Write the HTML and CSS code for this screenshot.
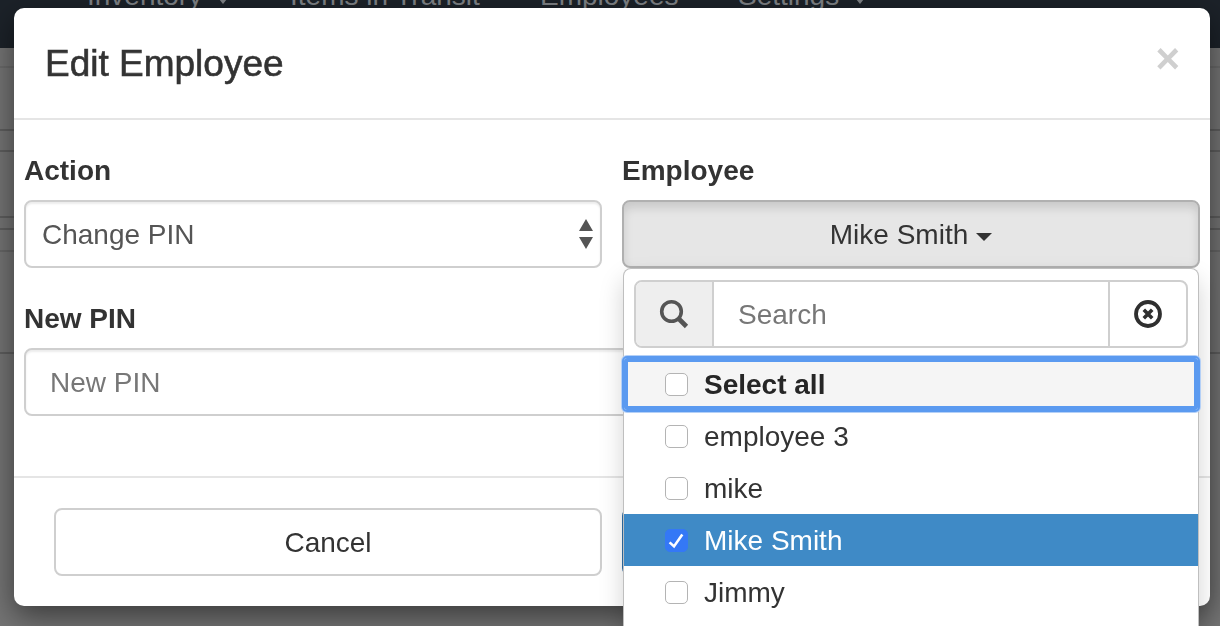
FILE: index.html
```html
<!DOCTYPE html>
<html lang="en">
<head>
<meta charset="utf-8">
<title>Edit Employee</title>
<link rel="stylesheet" href="styles.css">
</head>
<body>
<nav class="nav">
  <span class="nav-item nav-inventory">Inventory<i class="nav-caret"></i></span>
  <span class="nav-item nav-transit">Items in Transit</span>
  <span class="nav-item nav-employees">Employees</span>
  <span class="nav-item">Settings<i class="nav-caret"></i></span>
</nav>
<main class="page">
  <div class="rule rule-1"></div>
  <div class="rule rule-2"></div>
  <div class="rule rule-3"></div>
  <div class="rule rule-4"></div>
  <div class="rule rule-5"></div>
  <div class="rule rule-6"></div>
  <div class="rule rule-7"></div>
</main>
<section class="modal">
  <header class="modal-header">
    <h4 class="modal-title">Edit Employee</h4>
    <span class="close">×</span>
  </header>
  <div class="modal-body">
    <div class="field">
      <label class="label">Action</label>
      <div class="select">
        <span>Change PIN</span>
        <svg class="updown" width="14" height="30" viewBox="0 0 14 30"><path d="M7 0 14 12H0Z M0 18H14L7 30Z" fill="#555"/></svg>
      </div>
    </div>
    <div class="field field-employee">
      <label class="label">Employee</label>
      <button class="toggle">Mike Smith<i class="caret"></i></button>
      <div class="dropdown">
        <div class="search">
          <span class="addon addon-left">
            <svg width="30" height="30" viewBox="0 0 30 30"><circle cx="12.5" cy="12.5" r="9.8" fill="none" stroke="#555" stroke-width="3.6"/><path d="M19 19 27.5 27.5" stroke="#555" stroke-width="4.6"/></svg>
          </span>
          <input class="search-input" placeholder="Search">
          <span class="addon addon-right">
            <svg width="30" height="30" viewBox="0 0 30 30"><circle cx="15" cy="15" r="12" fill="none" stroke="#2f2f2f" stroke-width="3.8"/><path d="M10.8 10.8 19.2 19.2M19.2 10.8 10.8 19.2" stroke="#2f2f2f" stroke-width="3.6"/></svg>
          </span>
        </div>
        <ul class="options">
          <li class="option option-all"><i class="check"></i>Select all</li>
          <li class="option"><i class="check"></i>employee 3</li>
          <li class="option"><i class="check"></i>mike</li>
          <li class="option option-active"><i class="check check-on"><svg width="23" height="23" viewBox="0 0 23 23"><path d="M4.6 13.4 9 17.4 17.3 5.4" fill="none" stroke="#fff" stroke-width="2.6"/></svg></i>Mike Smith</li>
          <li class="option"><i class="check"></i>Jimmy</li>
        </ul>
      </div>
    </div>
    <div class="field field-wide">
      <label class="label">New PIN</label>
      <input class="text-input" placeholder="New PIN">
    </div>
  </div>
  <footer class="modal-footer">
    <button class="btn">Cancel</button>
    <button class="btn btn-primary">Save</button>
  </footer>
</section>
</body>
</html>
```
FILE: styles.css
```css
* { box-sizing: border-box; }
html, body { height: 100%; }
body {
  margin: 0;
  overflow: hidden;
  background: #747474;
  font-family: "Liberation Sans", Arial, sans-serif;
  font-size: 28px;
  color: #333;
}
.nav {
  height: 48px;
  background: #1c2229;
  display: flex;
  padding-left: 87px;
  overflow: hidden;
  color: #7f8286;
  line-height: 12px;
}
.nav-item { white-space: nowrap; margin-top: -10px; }
.nav-inventory { width: 203px; }
.nav-transit { width: 250px; }
.nav-employees { width: 198px; }
.nav-caret {
  display: inline-block;
  margin-left: 17px;
  vertical-align: 1px;
  border-top: 5px solid #7f8286;
  border-left: 4px solid transparent;
  border-right: 4px solid transparent;
}
.page { display: flex; flex-direction: column; }
.rule { height: 2px; background: #5e5e5e; }
.rule-1 { margin-top: 18px; background: #6a6a6a; }
.rule-2 { margin-top: 61px; }
.rule-3 { margin-top: 19px; }
.rule-4 { margin-top: 64px; }
.rule-5 { margin-top: 10px; }
.rule-6 { margin-top: 20px; background: #666; }
.rule-7 { margin-top: 100px; }
.modal {
  position: fixed;
  left: 14px;
  top: 8px;
  width: 1196px;
  height: 598px;
  background: #fff;
  border-radius: 10px;
  box-shadow: 0 10px 30px rgba(0, 0, 0, .5);
}
.modal-header {
  height: 112px;
  border-bottom: 2px solid #e5e5e5;
  display: flex;
  justify-content: space-between;
  padding: 0 30px 0 31px;
}
.modal-title {
  margin: 0;
  font-size: 37px;
  font-weight: 500;
  line-height: 112px;
  height: 110px;
  -webkit-text-stroke: .6px #333;
}
.close {
  font-size: 42px;
  font-weight: 700;
  color: #cfcfcf;
  line-height: 102px;
}
.modal-body {
  height: 356px;
  padding: 32px 10px 0;
  display: grid;
  grid-template-columns: 578px 578px;
  column-gap: 20px;
  row-gap: 32px;
  align-content: start;
}
.label {
  display: block;
  height: 36px;
  line-height: 38px;
  margin-bottom: 12px;
  font-weight: 700;
}
.select, .text-input {
  height: 68px;
  border: 2px solid #cfcfcf;
  border-radius: 8px;
  background: #fff;
  box-shadow: inset 0 2px 2px rgba(0, 0, 0, .075);
}
.select {
  display: flex;
  align-items: center;
  justify-content: space-between;
  padding: 2px 7px 0 16px;
  color: #555;
}
.updown { display: block; margin-top: -2px; }
.field-employee { position: relative; }
.field-wide { grid-column: 1 / 3; margin-right: 12px; }
.text-input {
  display: block;
  width: 100%;
  padding: 2px 24px 0;
  font: inherit;
  color: #555;
}
.text-input::placeholder, .search-input::placeholder { color: #777; opacity: 1; }
.toggle {
  display: block;
  width: 100%;
  height: 68px;
  border: 2px solid #b0b0b0;
  border-radius: 8px;
  background: #e6e6e6;
  box-shadow: inset 0 6px 10px rgba(0, 0, 0, .125);
  font: inherit;
  color: #333;
  padding: 2px 0 0;
}
.caret {
  display: inline-block;
  margin-left: 8px;
  vertical-align: middle;
  border-top: 8px solid #333;
  border-left: 8px solid transparent;
  border-right: 8px solid transparent;
}
.dropdown {
  position: absolute;
  top: 116px;
  left: 1px;
  width: 576px;
  padding-top: 11px;
  padding-bottom: 30px;
  background: #fff;
  border: 1px solid rgba(0, 0, 0, .25);
  border-radius: 8px;
  box-shadow: 0 12px 24px rgba(0, 0, 0, .175);
}
.search {
  display: flex;
  height: 68px;
  margin: 0 10px;
  border: 2px solid #cfcfcf;
  border-radius: 8px;
  overflow: hidden;
}
.addon {
  display: flex;
  align-items: center;
  justify-content: center;
  flex: none;
}
.addon-left { width: 78px; background: #eee; border-right: 2px solid #cfcfcf; }
.addon-right { width: 78px; border-left: 2px solid #cfcfcf; }
.search-input {
  flex: 1;
  min-width: 0;
  border: 0;
  outline: 0;
  padding: 2px 24px 0;
  font: inherit;
  color: #555;
}
.options {
  list-style: none;
  margin: 10px 0 0;
  padding: 0;
}
.option {
  display: flex;
  align-items: center;
  height: 52px;
  padding: 2px 0 0 41px;
  white-space: nowrap;
}
.option-all {
  font-weight: 700;
  color: #262626;
  background: #f5f5f5;
  border-radius: 3px;
  box-shadow: inset 0 0 0 4px #5b9af0, 0 0 0 2px #5b9af0, 0 0 0 3px #b4d0f7;
}
.option-active { background: #3f8ac6; color: #fff; }
.check {
  flex: none;
  display: block;
  width: 23px;
  height: 23px;
  margin: -2px 16px 0 0;
  background: #fff;
  border: 1px solid #b4b4b4;
  border-radius: 5px;
}
.check svg { display: block; margin: -1px; }
.check-on { background: #3478f6; border-color: #3478f6; }
.modal-footer {
  height: 130px;
  border-top: 2px solid #e5e5e5;
  padding: 30px 40px;
  display: grid;
  grid-template-columns: 548px 548px;
  column-gap: 20px;
}
.btn {
  height: 68px;
  border: 2px solid #cfcfcf;
  border-radius: 8px;
  background: #fff;
  font: inherit;
  color: #333;
  padding: 2px 0 0;
}
.btn-primary { background: #428bca; border-color: #2f6da5; color: #fff; }
```
